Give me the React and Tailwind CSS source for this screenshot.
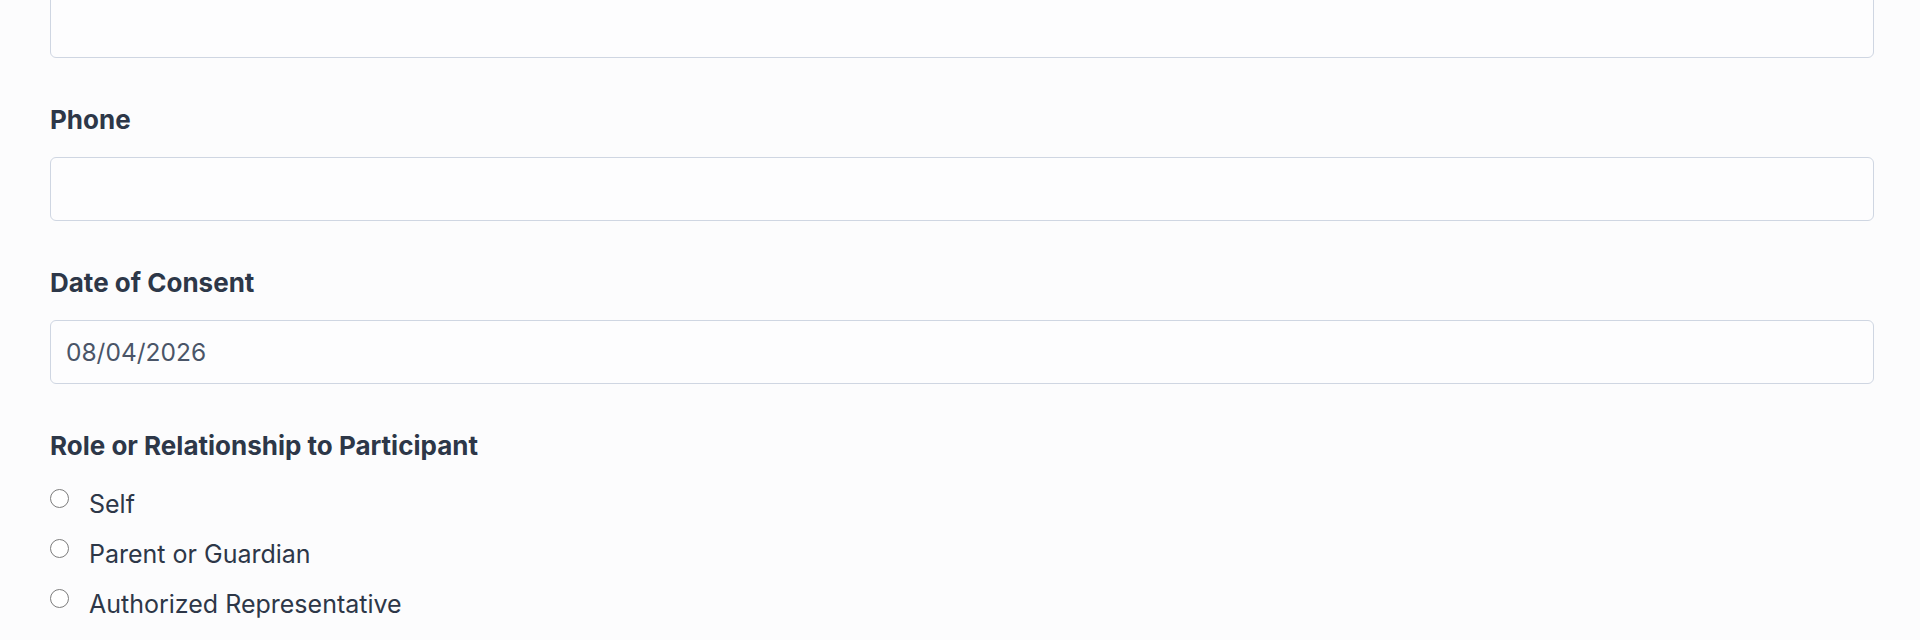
import { useState } from 'react'

// Campos del formulario de consentimiento (vista parcial, ya desplazada).
const ROLES = ['Self', 'Parent or Guardian', 'Authorized Representative']

function Field({ label, value }) {
  return (
    <div className="mt-[44px]">
      <label className="block text-[26px] leading-[36px] font-bold text-[#2d3748]">{label}</label>
      <input
        type="text"
        defaultValue={value}
        className="mt-[19px] block h-[64px] w-full rounded-[6px] border-[1.5px] border-[#cfd6e2] bg-[#fdfdfe] px-[15px] text-[24.5px] text-[#4a5568] outline-none"
      />
    </div>
  )
}

export default function App() {
  const [role, setRole] = useState('')

  return (
    <div className="min-h-screen overflow-hidden bg-[#fcfcfd] pl-[50px] pr-[46px] font-['Inter','Noto_Sans',sans-serif]">
      {/* Campo anterior, cortado por arriba */}
      <input
        type="text"
        className="-mt-[6px] block h-[64px] w-full rounded-[6px] border-[1.5px] border-[#cfd6e2] bg-[#fdfdfe] px-[15px] text-[24.5px] outline-none"
      />

      <Field label="Phone" value="" />
      <Field label="Date of Consent" value="08/04/2026" />

      <div className="mt-[44px]">
        <div className="text-[26px] leading-[36px] font-bold text-[#2d3748]">Role or Relationship to Participant</div>
        <div className="mt-[22px] flex flex-col gap-[14px]">
          {ROLES.map(r => (
            <label key={r} className="flex items-start gap-[20px] text-[25px] leading-[36px] text-[#2d3748]">
              <input
                type="radio"
                name="role"
                checked={role === r}
                onChange={() => setRole(r)}
                className="mt-[3px] size-[19px] shrink-0 appearance-none rounded-full border-[1.5px] border-[#7c7c7c] bg-white"
              />
              <span>{r}</span>
            </label>
          ))}
        </div>
      </div>
    </div>
  )
}
